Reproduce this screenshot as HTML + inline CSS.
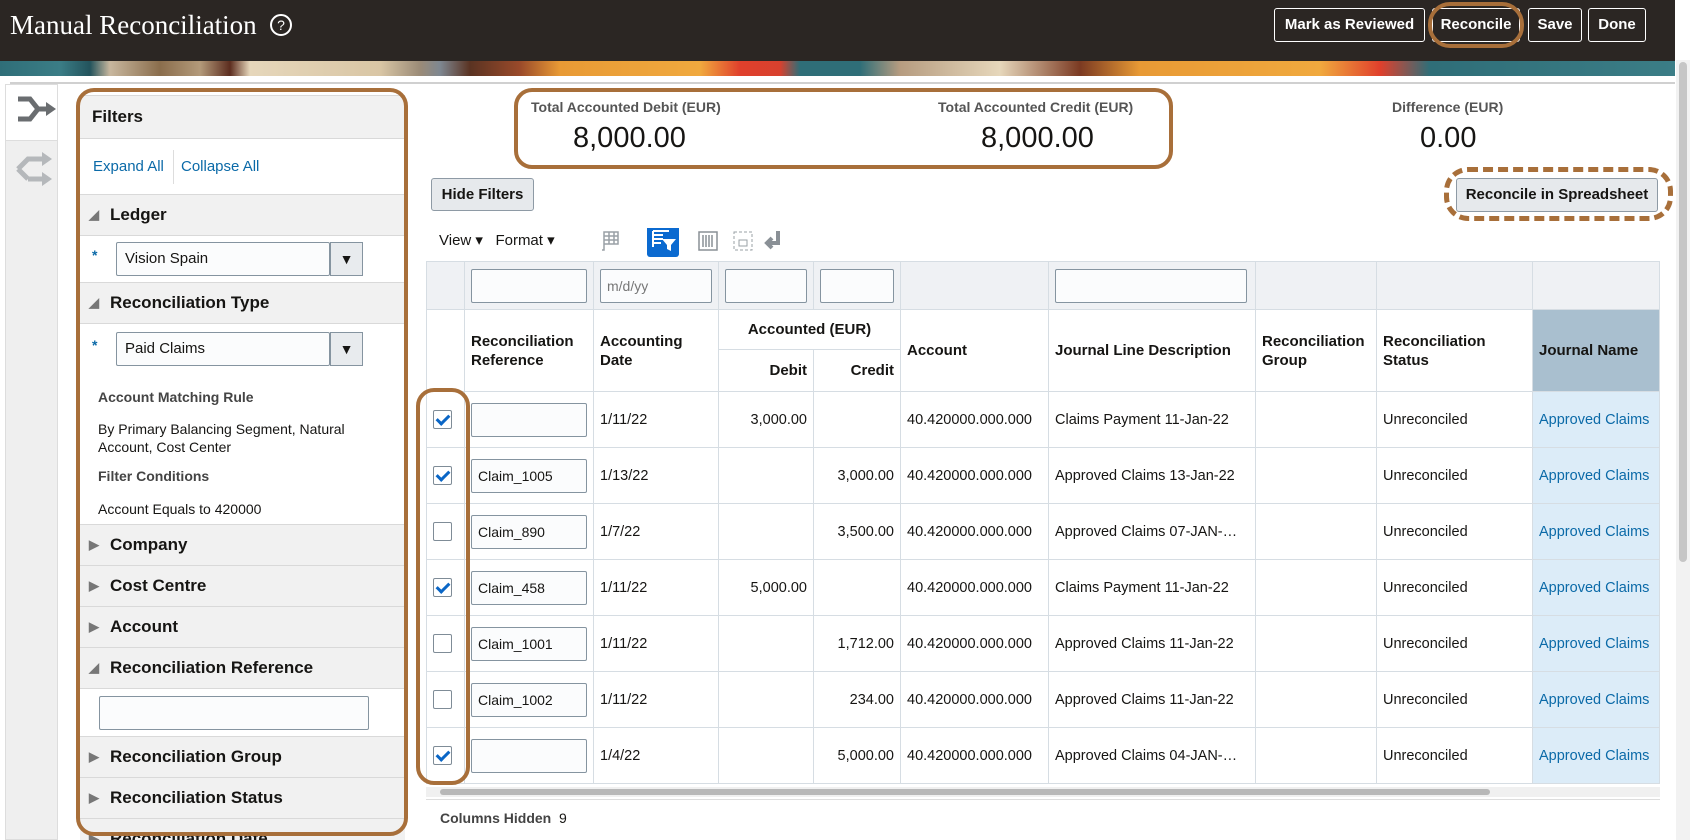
<!DOCTYPE html>
<html><head><meta charset="utf-8">
<style>
*{box-sizing:border-box;margin:0;padding:0}
body{width:1690px;height:840px;overflow:hidden;background:#fff;font-family:"Liberation Sans",sans-serif;color:#161513;position:relative}
.a{position:absolute}
.hdr{left:0;top:0;width:1675px;height:61px;background:#2b2623}
.title{left:10px;top:10px;font-family:"Liberation Serif",serif;font-size:27px;color:#fff}
.help{left:270px;top:14px;width:22px;height:22px;border:2px solid #fff;border-radius:50%;color:#fff;font-size:14px;text-align:center;line-height:18px}
.hb{top:8px;height:34px;border:1px solid #fff;border-radius:3px;color:#fff;font-weight:bold;font-size:15px;text-align:center;line-height:32px}
.banner{left:0;top:61px;width:1675px;height:15px;background:linear-gradient(90deg,#2f6e78 0,#3b7d86 60px,#23535c 90px,#c8b79e 110px,#8a6d4c 160px,#b39a7a 200px,#5c2d1f 230px,#e6d7bb 250px,#d9c6a5 380px,#9b8b77 420px,#7e8791 440px,#5a3322 470px,#9a4a2a 520px,#e89a35 560px,#f0a93e 700px,#e0402c 740px,#d8412e 780px,#2f6e78 800px,#2f6e78 860px,#b69c80 900px,#e6d7bb 1000px,#7b3a22 1080px,#e89a35 1140px,#f0a93e 1320px,#e0402c 1380px,#2f6e78 1430px,#3b7d86 1675px)}
.line{left:10px;top:82px;width:1665px;height:2px;background:#d0d0d0}
.sbar{left:1676px;top:60px;width:14px;height:780px;background:#f2f2f2}
.sthumb{left:1679px;top:62px;width:8px;height:500px;background:#c6c6c6;border-radius:4px}
.lt{left:5px;top:84px;width:53px;height:56px;background:#fff;border:1px solid #ddd;border-bottom:none}
.lt2{left:5px;top:140px;width:53px;height:700px;background:#efefef;border:1px solid #ddd}
.panel{left:80px;top:95px;width:325px;height:745px;background:#fff;overflow:hidden}
.sec{position:absolute;left:0;width:325px;background:#f1f1f1;border-top:1px solid #d9d9d9;border-bottom:1px solid #d9d9d9;font-weight:bold;font-size:17px;line-height:40px;padding-left:30px}
.tri{position:absolute;left:9px;top:0;font-size:13px;color:#777}
.lbl{position:absolute;font-size:14px;color:#161513}
.inp{position:absolute;border:1px solid #8594a0;background:#fbfcfd;border-radius:2px}
.dd{position:absolute;border:1px solid #8594a0;background:#e8ebee;text-align:center;font-size:14px;line-height:32px}
.orng{border:4px solid #a86f3a;border-radius:18px}
.tl{font-size:14px;color:#555;font-weight:bold}
.big{font-size:29px;color:#161513}
.btn{border:1px solid #8e9aa5;background:#e6e9ec;border-radius:3px;font-weight:bold;font-size:15px;text-align:center}
.tb{border-collapse:collapse;position:absolute;left:426px;top:261px;table-layout:fixed}
.tb td{border:1px solid #d6dde3;font-size:14.5px;padding:0 6px;height:56px;vertical-align:middle;white-space:nowrap;overflow:hidden}
.tb tr.f td{height:48px;background:#eff1f4}
.tb th{border:1px solid #d6dde3;font-size:15px;text-align:left;padding:0 6px;font-weight:bold;line-height:19px}
.tb th.r,.tb td.r{text-align:right}
.ci{display:inline-block;width:116px;height:34px;border:1px solid #8594a0;border-radius:2px;background:#fbfcfd;font-size:14px;line-height:32px;padding-left:6px;vertical-align:middle}
.cb{display:inline-block;width:19px;height:19px;border:1px solid #7f8c97;border-radius:2px;background:#fff;vertical-align:middle;position:relative}
.cb.on:after{content:"";position:absolute;left:5px;top:1px;width:5px;height:10px;border:solid #0a66c6;border-width:0 3px 3px 0;transform:rotate(45deg)}
.jn{background:#dcecf8;color:#0b6aa8}
</style></head><body>
<div class="a hdr"></div>
<div class="a title">Manual Reconciliation</div>
<div class="a help">?</div>
<div class="a hb" style="left:1274px;width:151px">Mark as Reviewed</div>
<div class="a hb" style="left:1432px;width:88px">Reconcile</div>
<div class="a orng" style="left:1428px;top:2px;width:96px;height:46px;border-radius:22px"></div>
<div class="a hb" style="left:1528px;width:54px">Save</div>
<div class="a hb" style="left:1588px;width:58px">Done</div>
<div class="a banner"></div>
<div class="a line"></div>
<div class="a sbar"></div><div class="a sthumb"></div>
<div class="a lt"><svg width="53" height="56"><path d="M12 14 L24 14 L32 24 L44 24 M12 34 L24 34 L32 24" stroke="#6a6d70" stroke-width="5" fill="none"/><path d="M40 17 L50 24 L40 31Z" fill="#6a6d70"/></svg></div>
<div class="a lt2"><svg width="53" height="56"><path d="M12 28 L22 18 L38 18 M22 38 L38 38 M12 28 L22 38" stroke="#b5b8bb" stroke-width="5" fill="none"/><path d="M36 11 L46 18 L36 25Z M36 31 L46 38 L36 45Z" fill="#b5b8bb"/></svg></div>

<div class="a panel">
 <div class="sec" style="top:0;height:44px;line-height:42px;padding-left:12px">Filters</div>
 <div class="lbl" style="left:13px;top:63px;color:#0b6aa8;font-size:15px">Expand All</div>
 <div class="a" style="left:93px;top:55px;width:1px;height:34px;background:#ddd"></div>
 <div class="lbl" style="left:101px;top:63px;color:#0b6aa8;font-size:15px">Collapse All</div>
 <div class="sec" style="top:99px;height:42px"><span class="tri">◢</span>Ledger</div>
 <div class="lbl" style="left:12px;top:152px;color:#0b6aa8;font-weight:bold">*</div>
 <div class="inp" style="left:36px;top:147px;width:214px;height:34px;font-size:15px;line-height:32px;padding-left:8px">Vision Spain</div>
 <div class="dd" style="left:250px;top:147px;width:33px;height:34px">▼</div>
 <div class="sec" style="top:187px;height:42px"><span class="tri">◢</span>Reconciliation Type</div>
 <div class="lbl" style="left:12px;top:242px;color:#0b6aa8;font-weight:bold">*</div>
 <div class="inp" style="left:36px;top:237px;width:214px;height:34px;font-size:15px;line-height:32px;padding-left:8px">Paid Claims</div>
 <div class="dd" style="left:250px;top:237px;width:33px;height:34px">▼</div>
 <div class="lbl" style="left:18px;top:294px;font-weight:bold;color:#444">Account Matching Rule</div>
 <div class="lbl" style="left:18px;top:325px;line-height:18px">By Primary Balancing Segment, Natural<br>Account, Cost Center</div>
 <div class="lbl" style="left:18px;top:373px;font-weight:bold;color:#444">Filter Conditions</div>
 <div class="lbl" style="left:18px;top:406px">Account Equals to 420000</div>
 <div class="sec" style="top:429px;height:42px"><span class="tri">▶</span>Company</div>
 <div class="sec" style="top:470px;height:42px"><span class="tri">▶</span>Cost Centre</div>
 <div class="sec" style="top:511px;height:42px"><span class="tri">▶</span>Account</div>
 <div class="sec" style="top:552px;height:42px"><span class="tri">◢</span>Reconciliation Reference</div>
 <div class="inp" style="left:19px;top:601px;width:270px;height:34px"></div>
 <div class="sec" style="top:641px;height:42px"><span class="tri">▶</span>Reconciliation Group</div>
 <div class="sec" style="top:682px;height:42px"><span class="tri">▶</span>Reconciliation Status</div>
 <div class="sec" style="top:723px;height:42px"><span class="tri">▶</span>Reconciliation Date</div>
</div>
<div class="a orng" style="left:76px;top:88px;width:332px;height:748px"></div>

<div class="a orng" style="left:514px;top:88px;width:659px;height:81px"></div>
<div class="a tl" style="left:531px;top:99px">Total Accounted Debit (EUR)</div>
<div class="a big" style="left:573px;top:122px">8,000.00</div>
<div class="a tl" style="left:938px;top:99px">Total Accounted Credit (EUR)</div>
<div class="a big" style="left:981px;top:122px">8,000.00</div>
<div class="a tl" style="left:1392px;top:99px">Difference (EUR)</div>
<div class="a big" style="left:1420px;top:122px">0.00</div>

<div class="a btn" style="left:431px;top:178px;width:103px;height:33px;line-height:31px">Hide Filters</div>
<div class="a btn" style="left:1456px;top:178px;width:202px;height:34px;line-height:32px">Reconcile in Spreadsheet</div>
<div class="a" style="left:1444px;top:167px;width:229px;height:54px;border:5px dashed #a86f3a;border-radius:24px"></div>

<div class="a" style="left:439px;top:231px;font-size:15px">View ▾&nbsp;&nbsp; Format ▾</div>
<svg class="a" style="left:600px;top:228px" width="180" height="30">
<path d="M4 4h14v12H4z M4 8h14 M4 12h14 M9 4v12 M14 4v12 M4 16v6h-2" stroke="#9aa0a6" stroke-width="1.5" fill="none"/>
<rect x="47" y="-5" width="32" height="34" rx="3" fill="#0b6ad0"/>
<path d="M53 3h16 M53 7h10 M53 11h10 M53 15h8 M53 3v16" stroke="#fff" stroke-width="2"/>
<path d="M62 11h14l-5 6v6l-4-2v-4z" fill="#fff"/>
<rect x="99" y="4" width="18" height="18" stroke="#8a9096" fill="none" stroke-width="1.5"/>
<path d="M103 7v12 M106 7v12 M109 7v12 M112 7v12" stroke="#8a9096" stroke-width="1.5"/>
<rect x="134" y="4" width="18" height="18" stroke="#9aa0a6" fill="none" stroke-dasharray="3 2"/>
<rect x="139" y="12" width="8" height="6" stroke="#9aa0a6" fill="none"/>
<path d="M178 3v12h-10 M172 10l-5 5 5 5" stroke="#8a9096" stroke-width="4" fill="none"/>
</svg>

<table class="tb">
<colgroup><col style="width:38px"><col style="width:127px"><col style="width:121px"><col style="width:95px"><col style="width:87px"><col style="width:148px"><col style="width:207px"><col style="width:121px"><col style="width:156px"><col style="width:127px"></colgroup>
<tr class="f"><td></td><td><span class="ci"></span></td><td><span class="ci" style="width:112px;color:#777">m/d/yy</span></td><td><span class="ci" style="width:82px"></span></td><td><span class="ci" style="width:74px"></span></td><td></td><td><span class="ci" style="width:192px"></span></td><td></td><td></td><td></td></tr>
<tr style="height:40px"><th rowspan="2"></th><th rowspan="2">Reconciliation<br>Reference</th><th rowspan="2">Accounting<br>Date</th><th colspan="2" style="text-align:center">Accounted (EUR)</th><th rowspan="2">Account</th><th rowspan="2">Journal Line Description</th><th rowspan="2">Reconciliation<br>Group</th><th rowspan="2">Reconciliation<br>Status</th><th rowspan="2" style="background:#a9bfcf">Journal Name</th></tr>
<tr style="height:42px"><th class="r">Debit</th><th class="r">Credit</th></tr>
<tr><td><span class="cb on"></span></td><td><span class="ci"></span></td><td>1/11/22</td><td class="r">3,000.00</td><td></td><td>40.420000.000.000</td><td>Claims Payment 11-Jan-22</td><td></td><td>Unreconciled</td><td class="jn">Approved Claims</td></tr>
<tr><td><span class="cb on"></span></td><td><span class="ci">Claim_1005</span></td><td>1/13/22</td><td></td><td class="r">3,000.00</td><td>40.420000.000.000</td><td>Approved Claims 13-Jan-22</td><td></td><td>Unreconciled</td><td class="jn">Approved Claims</td></tr>
<tr><td><span class="cb"></span></td><td><span class="ci">Claim_890</span></td><td>1/7/22</td><td></td><td class="r">3,500.00</td><td>40.420000.000.000</td><td>Approved Claims 07-JAN-…</td><td></td><td>Unreconciled</td><td class="jn">Approved Claims</td></tr>
<tr><td><span class="cb on"></span></td><td><span class="ci">Claim_458</span></td><td>1/11/22</td><td class="r">5,000.00</td><td></td><td>40.420000.000.000</td><td>Claims Payment 11-Jan-22</td><td></td><td>Unreconciled</td><td class="jn">Approved Claims</td></tr>
<tr><td><span class="cb"></span></td><td><span class="ci">Claim_1001</span></td><td>1/11/22</td><td></td><td class="r">1,712.00</td><td>40.420000.000.000</td><td>Approved Claims 11-Jan-22</td><td></td><td>Unreconciled</td><td class="jn">Approved Claims</td></tr>
<tr><td><span class="cb"></span></td><td><span class="ci">Claim_1002</span></td><td>1/11/22</td><td></td><td class="r">234.00</td><td>40.420000.000.000</td><td>Approved Claims 11-Jan-22</td><td></td><td>Unreconciled</td><td class="jn">Approved Claims</td></tr>
<tr><td><span class="cb on"></span></td><td><span class="ci"></span></td><td>1/4/22</td><td></td><td class="r">5,000.00</td><td>40.420000.000.000</td><td>Approved Claims 04-JAN-…</td><td></td><td>Unreconciled</td><td class="jn">Approved Claims</td></tr>
</table>
<div class="a" style="left:426px;top:787px;width:1234px;height:10px;background:#f0f0f0"></div>
<div class="a" style="left:440px;top:789px;width:1050px;height:6px;background:#b8b8b8;border-radius:3px"></div>
<div class="a" style="left:426px;top:799px;width:1234px;height:1px;background:#ddd"></div>
<div class="a" style="left:440px;top:810px;font-size:14px;font-weight:bold;color:#444">Columns Hidden&nbsp; <span style="font-weight:normal;color:#161513">9</span></div>
<div class="a orng" style="left:416px;top:388px;width:54px;height:397px"></div>
</body></html>
